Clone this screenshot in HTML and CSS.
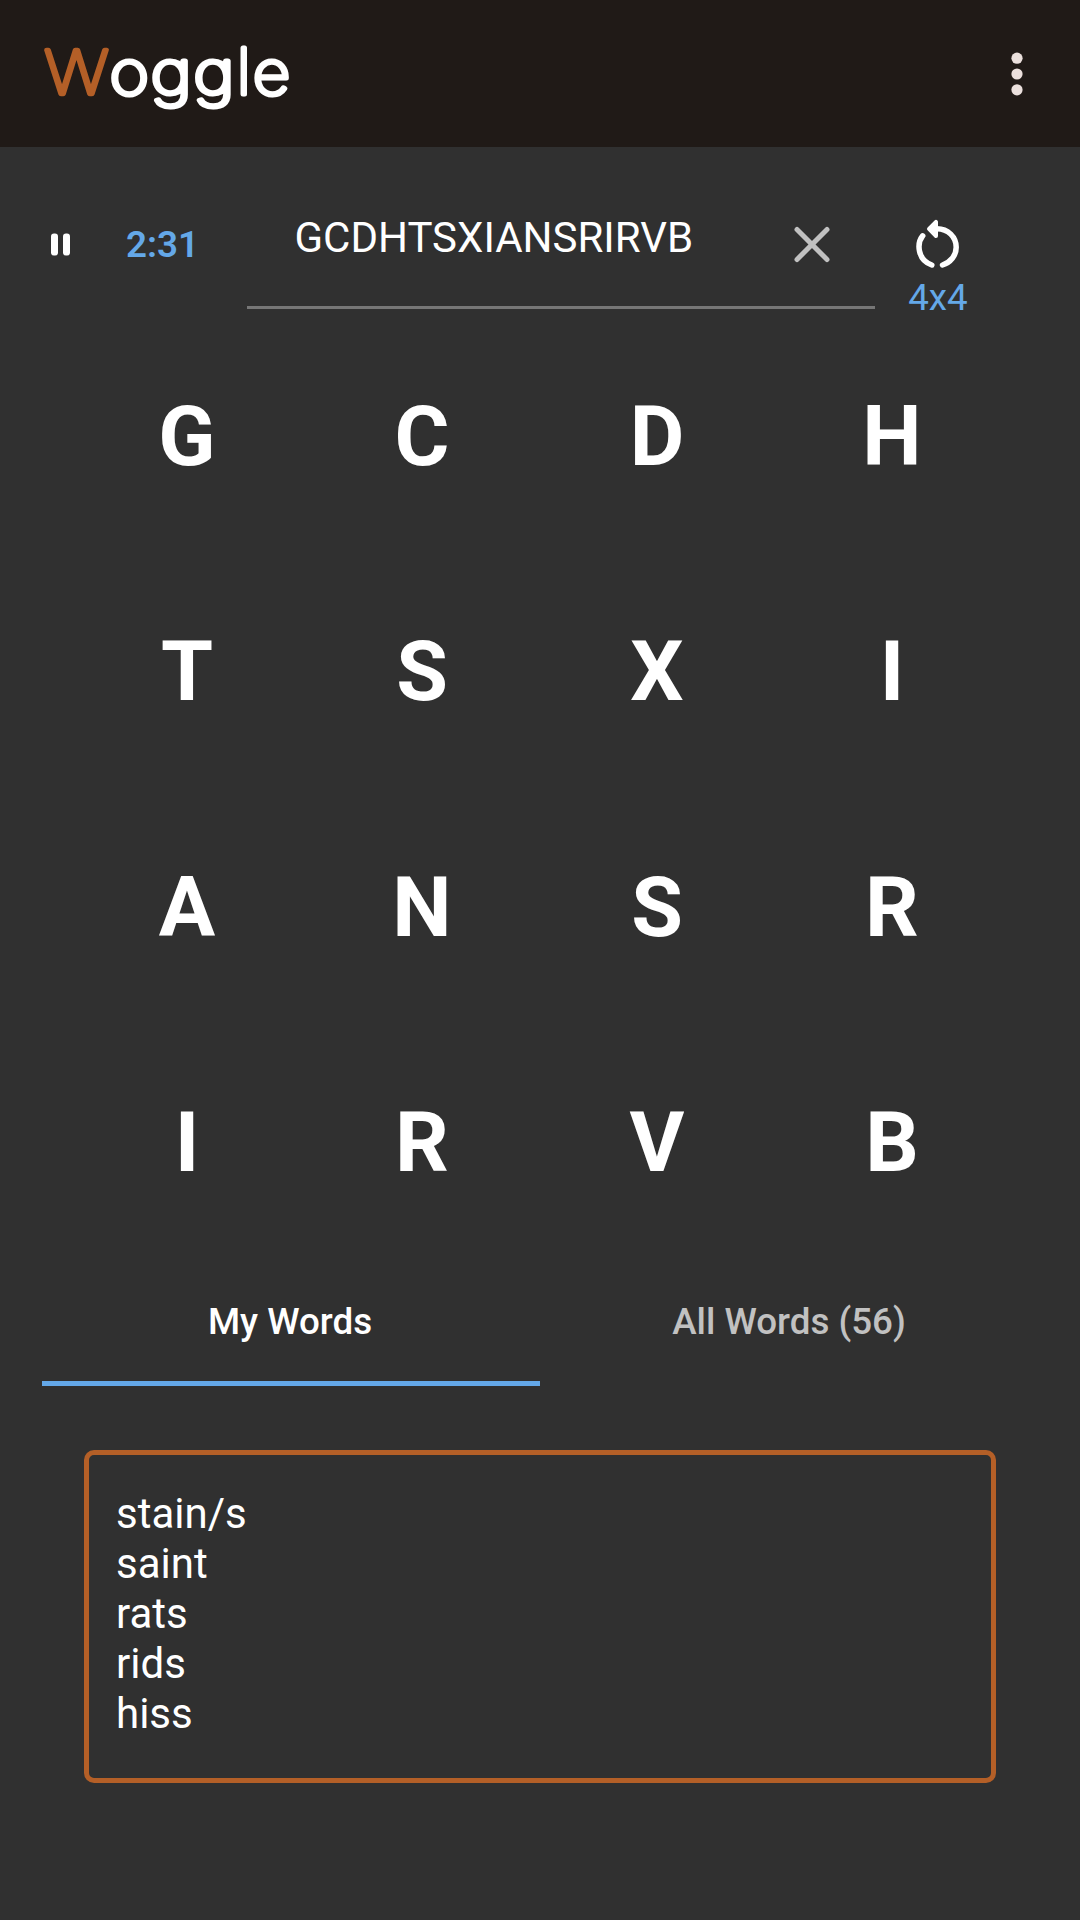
FILE: index.html
```html
<!DOCTYPE html>
<html lang="en">
<head>
<meta charset="utf-8">
<title>Woggle</title>
<link rel="stylesheet" href="styles.css">
</head>
<body>
<header class="app-bar">
  <svg class="logo" width="260" height="100" viewBox="40 25 260 100" role="img" aria-label="Woggle">
    <text class="logo-text" y="93.500"><tspan class="logo-accent" x="44.5" textLength="64" lengthAdjust="spacingAndGlyphs">W</tspan><tspan x="109.700" textLength="39" lengthAdjust="spacingAndGlyphs">o</tspan><tspan x="150.800" textLength="41" lengthAdjust="spacingAndGlyphs">g</tspan><tspan x="193.500" textLength="41" lengthAdjust="spacingAndGlyphs">g</tspan><tspan class="logo-tall" x="237">l</tspan><tspan x="253" textLength="37" lengthAdjust="spacingAndGlyphs">e</tspan></text>
  </svg>
  <svg class="menu" width="20" height="60" viewBox="0 0 20 60" fill="currentColor" aria-hidden="true">
    <circle cx="10" cy="14.2" r="5.6"/><circle cx="10" cy="30" r="5.6"/><circle cx="10" cy="45.8" r="5.6"/>
  </svg>
</header>
<main class="game">
  <section class="controls">
    <svg class="pause" width="30" height="30" viewBox="0 0 30 30" fill="currentColor" aria-hidden="true">
      <rect x="6" y="3.500" width="7" height="22" rx="3"/><rect x="18" y="3.500" width="7" height="22" rx="3"/>
    </svg>
    <div class="timer">2:31</div>
    <div class="entry">
      <span class="entry-text">GCDHTSXIANSRIRVB</span>
      <svg class="clear" width="40" height="40" viewBox="0 0 40 40" aria-hidden="true">
        <path d="M5 4.500L35 34.500M35 4.500L5 34.500"/>
      </svg>
    </div>
    <div class="restart">
      <svg class="restart-icon" width="50" height="54" viewBox="914 217 50 54" aria-hidden="true">
        <path class="arc" d="M938 228.7C949 228.7 957.2 237 957.2 247.2C957.2 255.500 951.500 262.500 943.500 265M923.700 235.800C917.500 243.500 918.500 260 932.800 265"/>
        <path class="head" d="M930 228.900L937 221.800V236Z"/>
      </svg>
      <span class="size">4x4</span>
    </div>
  </section>
  <section class="board">
    <span>G</span><span>C</span><span>D</span><span>H</span>
    <span>T</span><span>S</span><span>X</span><span>I</span>
    <span>A</span><span>N</span><span>S</span><span>R</span>
    <span>I</span><span>R</span><span>V</span><span>B</span>
  </section>
  <nav class="tabs">
    <div class="tab active">My Words</div>
    <div class="tab">All Words (56)</div>
  </nav>
  <ul class="words">
    <li>stain/s</li><li>saint</li><li>rats</li><li>rids</li><li>hiss</li>
  </ul>
</main>
</body>
</html>
```
FILE: styles.css
```css
* { box-sizing: border-box; }
body {
  margin: 0;
  min-height: 1920px;
  background: #303030;
  color: #fff;
  font-family: Roboto, sans-serif;
}
svg { display: block; flex: none; }
.app-bar {
  height: 147px;
  padding: 0 53px 0 40px;
  display: flex;
  align-items: center;
  justify-content: space-between;
  background: #201a17;
}
.logo { margin-top: 3px; overflow: visible; }
.logo-text {
  font: 100 60px Inter, sans-serif;
  fill: #fff;
  stroke: #fff;
  stroke-width: 5px;
  stroke-linejoin: round;
}
.logo-accent { fill: #b45f27; stroke: #b45f27; stroke-width: 4.5px; }
.logo-tall { font-size: 63px; }
.menu { color: #ebe0dd; }
.controls {
  height: 172px;
  padding-left: 45px;
  display: flex;
  align-items: flex-start;
}
.pause { margin-top: 83px; }
.timer {
  width: 172px;
  padding-left: 51px;
  margin-top: 78px;
  color: #64a8e8;
  font-size: 36.75px;
  font-weight: 600;
  line-height: 40px;
}
.entry {
  width: 628px;
  height: 162px;
  border-bottom: 3px solid #767676;
  padding: 66px 43px 0 47.5px;
  display: flex;
  justify-content: space-between;
}
.entry-text { font-size: 42px; line-height: 50px; }
.clear {
  margin-top: 12px;
  fill: none;
  stroke: #c1c1c1;
  stroke-width: 5px;
  stroke-linecap: round;
}
.restart {
  width: 126px;
  padding-top: 70px;
  display: flex;
  flex-direction: column;
  align-items: center;
}
.arc { fill: none; stroke: #fff; stroke-width: 5.5px; stroke-linecap: round; }
.head { fill: #fff; stroke: #fff; stroke-width: 4px; stroke-linejoin: round; }
.size { margin-top: 7px; color: #64a8e8; font-size: 36.75px; line-height: 40px; }
.board {
  width: 940px;
  margin-left: 69.5px;
  display: grid;
  grid-template-columns: repeat(4, 1fr);
  grid-auto-rows: 235.25px;
}
.board span {
  display: flex;
  align-items: center;
  justify-content: center;
  font-size: 84px;
  font-weight: 700;
}
.tabs {
  margin: 0 42px;
  height: 126px;
  display: grid;
  grid-template-columns: 1fr 1fr;
}
.tab {
  padding-top: 41px;
  border-bottom: 5px solid transparent;
  color: #c1c1c1;
  font-size: 36.75px;
  font-weight: 500;
  line-height: 42px;
  text-align: center;
}
.tab.active { padding-right: 2px; color: #fff; border-bottom-color: #64a8e8; }
.words {
  margin: 64px 84px 0;
  height: 333px;
  padding: 34px 27px;
  border: 5px solid #b45f27;
  border-radius: 10px;
  list-style: none;
  font-size: 42px;
  line-height: 50px;
}
```
